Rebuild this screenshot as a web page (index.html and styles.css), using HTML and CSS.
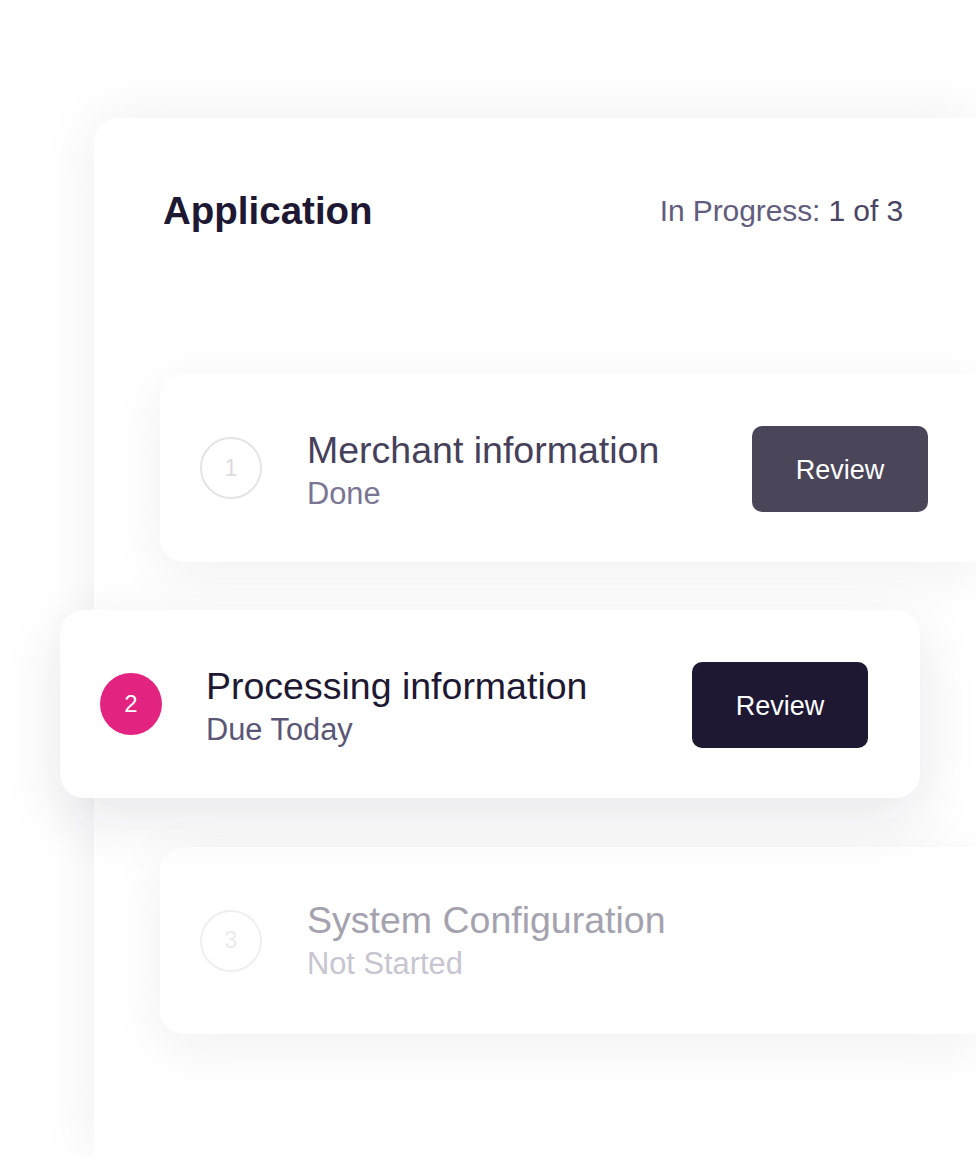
FILE: index.html
```html
<!DOCTYPE html>
<html lang="en">
<head>
<meta charset="utf-8">
<title>Application</title>
<link rel="stylesheet" href="styles.css">
</head>
<body>
  <main class="panel">
    <header class="panel-head">
      <h1 class="panel-title">Application</h1>
      <p class="progress">In Progress: <span class="progress-count">1 of 3</span></p>
    </header>
    <ol class="steps">
      <li class="step step-done">
        <span class="step-num">1</span>
        <div class="step-text">
          <div class="step-title">Merchant information</div>
          <div class="step-status">Done</div>
        </div>
        <button class="step-btn" type="button">Review</button>
      </li>
      <li class="step step-active">
        <span class="step-num">2</span>
        <div class="step-text">
          <div class="step-title">Processing information</div>
          <div class="step-status">Due Today</div>
        </div>
        <button class="step-btn" type="button">Review</button>
      </li>
      <li class="step step-todo">
        <span class="step-num">3</span>
        <div class="step-text">
          <div class="step-title">System Configuration</div>
          <div class="step-status">Not Started</div>
        </div>
      </li>
    </ol>
  </main>
</body>
</html>
```

FILE: styles.css
```css
html, body {
  margin: 0;
  padding: 0;
  background: #ffffff;
  overflow: hidden;
}

body {
  width: 976px;
  height: 1156px;
  font-family: "Liberation Sans", Arial, sans-serif;
  color: #1e1833;
}

.panel {
  box-sizing: border-box;
  margin: 118px 0 0 94px;
  width: 882px;
  height: 1038px;
  padding: 70px 0 0 69px;
  background: #ffffff;
  border-radius: 24px 0 0 0;
  box-shadow: 0 0 60px rgba(30, 24, 51, 0.07);
}

.panel-head {
  width: 740px;
  height: 46px;
  display: flex;
  align-items: center;
  justify-content: space-between;
}

.panel-title {
  margin: 0;
  font-size: 38.5px;
  line-height: 46px;
  font-weight: 700;
  color: #1e1833;
}

.progress {
  margin: 0;
  font-size: 30px;
  line-height: 46px;
  color: #625d7c;
  letter-spacing: -0.1px;
}

.progress-count {
  color: #4a4562;
}

.steps {
  list-style: none;
  margin: 140px 0 0 0;
  padding: 0;
  display: flex;
  flex-direction: column;
}

.step {
  box-sizing: border-box;
  width: 816px;
  height: 188px;
  display: flex;
  align-items: center;
  padding: 0 48px 0 40px;
  background: #ffffff;
  border-radius: 24px 0 0 24px;
  margin-left: -3px;
  box-shadow: 0 12px 55px rgba(30, 24, 51, 0.065);
}

.step-active {
  width: 860px;
  margin-top: 48px;
  margin-left: -103px;
  padding-right: 52px;
  border-radius: 24px;
  box-shadow: 0 20px 60px rgba(30, 24, 51, 0.1);
  position: relative;
}

.step-todo {
  margin-top: 49px;
  height: 187px;
}

.step-num {
  box-sizing: border-box;
  flex: none;
  width: 62px;
  height: 62px;
  border-radius: 50%;
  border: 2px solid #e4e4e6;
  display: flex;
  align-items: center;
  justify-content: center;
  font-size: 23px;
  color: #dcdbe0;
  margin-right: 45px;
}

.step-active .step-num {
  border: none;
  background: #e2237f;
  color: #ffffff;
  font-size: 24px;
  margin-right: 44px;
}

.step-todo .step-num {
  border-color: #efeff1;
  color: #ebebee;
}

.step-text {
  flex: 1;
  margin-top: 6px;
}

.step-todo .step-text {
  margin-top: 0;
}

.step-title {
  font-size: 37.5px;
  line-height: 46px;
  color: #46415b;
}

.step-status {
  font-size: 30.8px;
  line-height: 42px;
  color: #7a7592;
}

.step-active .step-title {
  color: #1e1833;
}

.step-active .step-status {
  color: #5b5676;
}

.step-todo .step-title {
  color: #a4a2ae;
}

.step-todo .step-status {
  color: #c7c5d0;
}

.step-btn {
  flex: none;
  box-sizing: border-box;
  width: 176px;
  height: 86px;
  margin-top: 2px;
  border: none;
  border-radius: 10px;
  background: #4a4559;
  color: #ffffff;
  font-family: "Liberation Sans", Arial, sans-serif;
  font-size: 27px;
  padding: 3px 0 0 0;
  cursor: pointer;
}

.step-active .step-btn {
  background: #1e1833;
}
```
